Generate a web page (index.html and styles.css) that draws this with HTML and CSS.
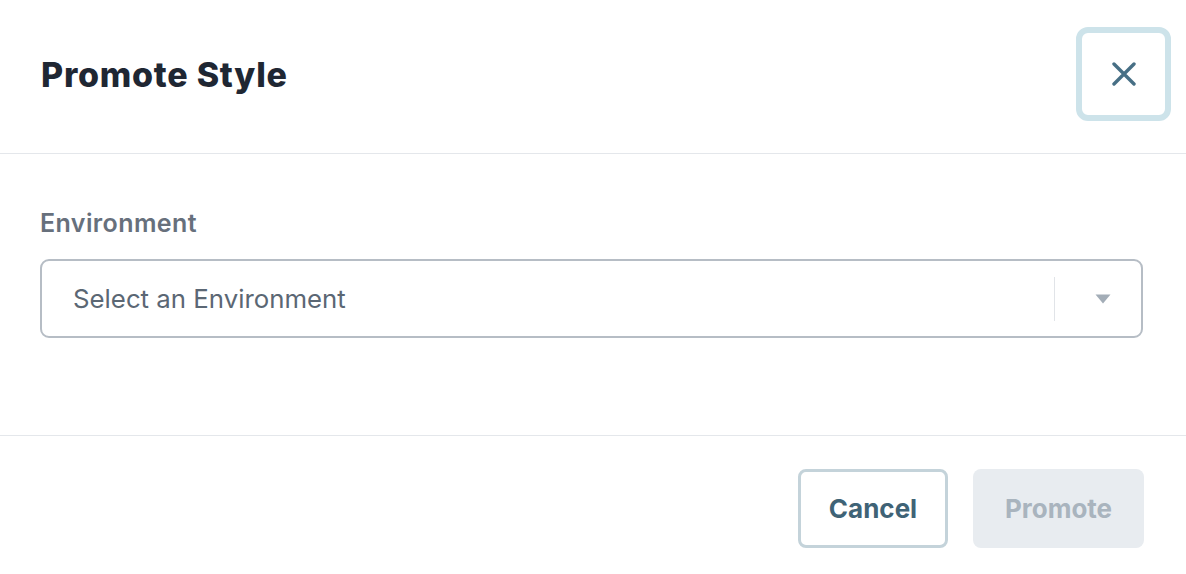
FILE: index.html
```html
<!DOCTYPE html>
<html lang="en">
<head>
<meta charset="utf-8">
<title>Promote Style</title>
<link rel="stylesheet" href="styles.css">
</head>
<body>
<div class="dialog">
  <header class="dialog-header">
    <h1 class="dialog-title">Promote Style</h1>
    <button class="close-btn" aria-label="Close">
      <svg width="24" height="24" viewBox="0 0 24 24" aria-hidden="true">
        <path d="M2 2 L22 22 M22 2 L2 22" stroke="#476f85" stroke-width="3.4" stroke-linecap="round" fill="none"/>
      </svg>
    </button>
  </header>
  <section class="dialog-body">
    <label class="field-label">Environment</label>
    <div class="select">
      <span class="select-placeholder">Select an Environment</span>
      <span class="select-sep"></span>
      <span class="select-caret">
        <svg width="16" height="10" viewBox="0 0 16 10" aria-hidden="true">
          <path d="M0.5 0.5 H15.5 L8 9.5 Z" fill="#a3adb7"/>
        </svg>
      </span>
    </div>
  </section>
  <footer class="dialog-footer">
    <button class="btn btn-cancel">Cancel</button>
    <button class="btn btn-promote" disabled>Promote</button>
  </footer>
</div>
</body>
</html>
```
FILE: styles.css
```css
* { box-sizing: border-box; }
html, body { margin: 0; padding: 0; background: #ffffff; }
body { font-family: Inter, "Noto Sans", sans-serif; }

.dialog { width: 1186px; }

.dialog-header {
  height: 154px;
  border-bottom: 1px solid #e4e7eb;
  display: flex;
  align-items: center;
  justify-content: space-between;
  padding: 0 15px 0 41px;
}
.dialog-title {
  margin: 0;
  font-size: 34px;
  font-weight: 800;
  color: #1f2733;
  letter-spacing: 0.75px;
  line-height: 1;
  padding-bottom: 4px;
}
.close-btn {
  width: 95px;
  height: 94px;
  border: 6px solid #cde3ea;
  border-radius: 12px;
  background: #ffffff;
  display: flex;
  align-items: center;
  justify-content: center;
  padding: 0;
  margin-top: -6px;
}

.dialog-body {
  padding: 55px 43px 97px 40px;
  border-bottom: 1px solid #e4e7eb;
}
.field-label {
  display: block;
  font-size: 25px;
  font-weight: 600;
  color: #67707c;
  line-height: 28px;
  letter-spacing: 0.4px;
  margin-bottom: 22px;
}
.select {
  height: 79px;
  border: 2px solid #b6bdc5;
  border-radius: 9px;
  display: flex;
  align-items: center;
  padding-left: 31px;
}
.select-placeholder {
  flex: 1;
  font-size: 25.8px;
  color: #5b6774;
}
.select-sep {
  width: 1px;
  height: 44px;
  background: #e1e4e8;
}
.select-caret {
  width: 86px;
  display: flex;
  justify-content: center;
  padding-left: 9px;
}

.dialog-footer {
  display: flex;
  justify-content: flex-end;
  gap: 25px;
  padding: 33px 42px 0 0;
}
.btn {
  height: 79px;
  border-radius: 8px;
  font-family: Inter, "Noto Sans", sans-serif;
  font-size: 26px;
  font-weight: 700;
  padding: 0;
}
.btn-cancel {
  width: 150px;
  background: #ffffff;
  border: 3px solid #c4d3da;
  color: #3f6376;
}
.btn-promote {
  width: 171px;
  background: #e8ecf0;
  border: none;
  color: #a9b4be;
}
```
